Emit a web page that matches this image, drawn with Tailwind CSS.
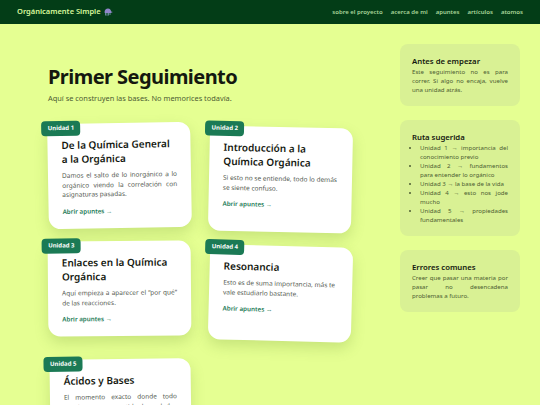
<!DOCTYPE html>
<html lang="es">

<head>
  <meta charset="UTF-8">
  <meta name="viewport" content="width=device-width, initial-scale=1.0">
  <title>Orgánicamente Simple - Primer Seguimiento</title>
  <script src="https://cdn.jsdelivr.net/npm/@tailwindcss/browser@4"></script>
</head>

<body class="bg-[#e5ff92] font-['Noto_Sans',sans-serif] h-[405px] overflow-hidden">

  <!-- Navbar -->
  <header class="h-6 bg-[#033d17] flex items-center justify-between pl-[17px] pr-[17px]">
    <a class="flex items-center gap-[3px] text-[7.5px] font-semibold text-[#d9f99d]">
      Orgánicamente Simple
      <svg class="w-[9px] h-[8px]" viewBox="0 0 9 8">
        <path d="M0.5 4.5C0.5 2 2 0.5 4 0.5S7 2 7.2 3.6L8.8 3.9 6.8 5H1Z" fill="#8f86c9" />
        <path d="M1.5 5V7.5M3 5V7.8M4.5 5V7.5M6 5V7" stroke="#7fa0b8" stroke-width="0.8" />
      </svg>
    </a>
    <nav class="flex gap-2 text-[6px] font-semibold text-[#a9d69a]">
      <a>sobre el proyecto</a>
      <a>acerca de mi</a>
      <a>apuntes</a>
      <a>artículos</a>
      <a>atomos</a>
    </nav>
  </header>

  <div class="flex">
    <!-- Main content -->
    <main class="w-[400px] pl-12 pt-[38px]">
      <h1 class="text-[20px] leading-[30px] font-bold text-[#14180f] tracking-[-0.55px]">Primer Seguimiento</h1>
      <p class="text-[7.4px] leading-3 text-[#4d5d33]">Aquí se construyen las bases. No memorices todavía.</p>

      <div class="grid grid-cols-[143px_143px] gap-x-[18px] gap-y-[13px] mt-[19px]">

        <!-- Unidad 1 -->
        <article class="relative rotate-[-1deg] bg-white rounded-xl shadow-[0_6px_14px_rgba(90,130,40,0.22)] px-[14px] pt-[14px] pb-[12px]">
          <span class="absolute -left-[6px] -top-[3px] bg-[#1b7a55] rounded-[4px] text-white text-[6px] leading-[15px] font-bold px-[6.5px]">Unidad 1</span>
          <h2 class="text-[10px] leading-[14px] font-semibold text-[#14180f]">De la Química General a la Orgánica</h2>
          <p class="text-[6.5px] leading-[9.5px] text-[#555b52] mt-[5px] text-justify">Damos el salto de lo inorgánico a lo orgánico viendo la correlación con asignaturas pasadas.</p>
          <a class="block text-[6.25px] leading-[10px] font-semibold text-[#1b7a55] mt-[7px]">Abrir apuntes →</a>
        </article>

        <!-- Unidad 2 -->
        <article class="relative translate-y-[4px] rotate-[1.2deg] bg-white rounded-xl shadow-[0_6px_14px_rgba(90,130,40,0.22)] px-[14px] pt-[14px] pb-[12px]">
          <span class="absolute -left-[5px] -top-[5px] bg-[#1b7a55] rounded-[4px] text-white text-[6px] leading-[15px] font-bold px-[6.5px]">Unidad 2</span>
          <h2 class="text-[10px] leading-[14px] font-semibold text-[#14180f]">Introducción a la Química Orgánica</h2>
          <p class="text-[6.5px] leading-[9.5px] text-[#555b52] mt-[5px]">Si esto no se entiende, todo lo demás se siente confuso.</p>
          <a class="block text-[6.25px] leading-[10px] font-semibold text-[#1b7a55] mt-[7px]">Abrir apuntes →</a>
        </article>

        <!-- Unidad 3 -->
        <article class="relative rotate-[-0.5deg] bg-white rounded-xl shadow-[0_6px_14px_rgba(90,130,40,0.22)] px-[14px] pt-[14px] pb-[12px]">
          <span class="absolute -left-[6px] -top-[3px] bg-[#1b7a55] rounded-[4px] text-white text-[6px] leading-[15px] font-bold px-[6.5px]">Unidad 3</span>
          <h2 class="text-[10px] leading-[14px] font-semibold text-[#14180f]">Enlaces en la Química Orgánica</h2>
          <p class="text-[6.5px] leading-[9.5px] text-[#555b52] mt-[5px] text-justify">Aquí empieza a aparecer el “por qué” de las reacciones.</p>
          <a class="block text-[6.25px] leading-[10px] font-semibold text-[#1b7a55] mt-[7px]">Abrir apuntes →</a>
        </article>

        <!-- Unidad 4 -->
        <article class="relative translate-y-[5px] rotate-[1.5deg] bg-white rounded-xl shadow-[0_6px_14px_rgba(90,130,40,0.22)] px-[14px] pt-[14px] pb-[12px]">
          <span class="absolute -left-[5px] -top-[5px] bg-[#1b7a55] rounded-[4px] text-white text-[6px] leading-[15px] font-bold px-[6.5px]">Unidad 4</span>
          <h2 class="text-[10px] leading-[14px] font-semibold text-[#14180f]">Resonancia</h2>
          <p class="text-[6.5px] leading-[9.5px] text-[#555b52] mt-[5px]">Esto es de suma importancia, más te vale estudiarlo bastante.</p>
          <a class="block text-[6.25px] leading-[10px] font-semibold text-[#1b7a55] mt-[7px]">Abrir apuntes →</a>
        </article>

        <!-- Unidad 5 -->
        <article class="relative rotate-[-0.8deg] mt-[10px] ml-[2px] bg-white rounded-xl shadow-[0_6px_14px_rgba(90,130,40,0.22)] px-[14px] pt-[14px] pb-[12px]">
          <span class="absolute -left-[6px] -top-[3px] bg-[#1b7a55] rounded-[4px] text-white text-[6px] leading-[15px] font-bold px-[6.5px]">Unidad 5</span>
          <h2 class="text-[10px] leading-[14px] font-semibold text-[#14180f]">Ácidos y Bases</h2>
          <p class="text-[6.5px] leading-[9.5px] text-[#555b52] mt-[5px] text-justify">El momento exacto donde todo empieza a tener sentido de verdad.</p>
          <a class="block text-[6.25px] leading-[10px] font-semibold text-[#1b7a55] mt-[7px]">Abrir apuntes →</a>
        </article>
      </div>
    </main>

    <!-- Sidebar -->
    <aside class="w-[120px] mt-5 flex flex-col gap-[14px]">
      <section class="bg-[#d9f194] rounded-lg px-3 pt-[12px] pb-3">
        <h3 class="text-[7.75px] leading-[11px] font-semibold text-[#14180f]">Antes de empezar</h3>
        <p class="text-[6.1px] leading-[9px] text-[#4d5d33] text-justify">Este seguimiento no es para correr. Si algo no encaja, vuelve una unidad atrás.</p>
      </section>
      <section class="bg-[#d9f194] rounded-lg px-3 pt-[12px] pb-3">
        <h3 class="text-[7.75px] leading-[11px] font-semibold text-[#14180f]">Ruta sugerida</h3>
        <ul class="list-disc pl-2 text-[6.1px] leading-[9px] text-[#4d5d33] text-justify">
          <li>Unidad 1 → importancia del conocimiento previo</li>
          <li>Unidad 2 → fundamentos para entender lo orgánico</li>
          <li>Unidad 3 → la base de la vida</li>
          <li>Unidad 4 → esto nos jode mucho</li>
          <li>Unidad 5 → propiedades fundamentales</li>
        </ul>
      </section>
      <section class="bg-[#d9f194] rounded-lg px-3 pt-[12px] pb-3">
        <h3 class="text-[7.75px] leading-[11px] font-semibold text-[#14180f]">Errores comunes</h3>
        <p class="text-[6.1px] leading-[9px] text-[#4d5d33] text-justify">Creer que pasar una materia por pasar no desencadena problemas a futuro.</p>
      </section>
    </aside>
  </div>

</body>

</html>
